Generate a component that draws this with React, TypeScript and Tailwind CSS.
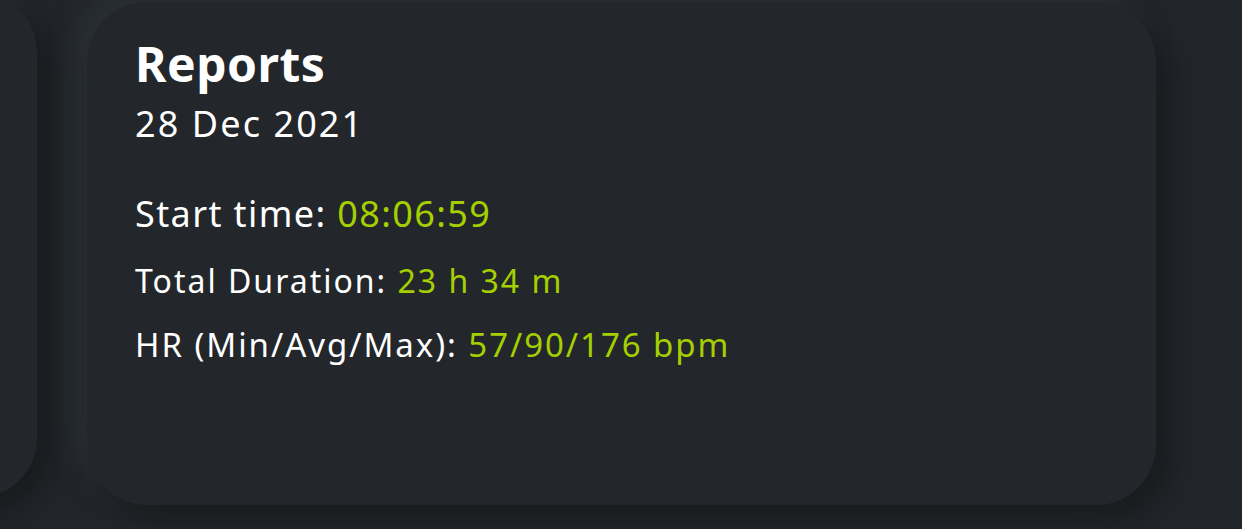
export default function App() {
  return (
    <div className="h-[529px] w-full overflow-hidden bg-[#22262a] flex items-start gap-[50px] font-['Noto_Sans',sans-serif]">
      {/* previous card, mostly scrolled out of view */}
      <div className="shrink-0 w-[400px] -ml-[363px] -mt-[8px] h-[506px] rounded-[60px] bg-[#23272b] shadow-[16px_16px_28px_#191c1f,-12px_-12px_24px_#2b3035]" />

      {/* reports card */}
      <div className="shrink-0 w-[1069px] h-[503px] mt-[2px] rounded-[60px] bg-[#23272b] shadow-[16px_16px_28px_#191c1f,-12px_-12px_24px_#2b3035] pl-[48px] pt-[34px] text-white">
        <h1 className="text-[48px] leading-[56px] font-bold tracking-[0.5px]">Reports</h1>
        <p className="text-[36px] leading-[64px] tracking-[2.1px]">28 Dec 2021</p>

        <div className="mt-[26px]">
          <p className="text-[36px] leading-[64px] tracking-[1.4px]">
            Start time: <span className="text-[#a5cf00]">08:06:59</span>
          </p>
          <p className="mt-[3px] text-[32px] leading-[64px] tracking-[2px]">
            Total Duration: <span className="text-[#a5cf00]">23 h 34 m</span>
          </p>
          <p className="text-[33px] leading-[64px] tracking-[1.95px]">
            HR (Min/Avg/Max): <span className="text-[#a5cf00]">57/90/176 bpm</span>
          </p>
        </div>
      </div>
    </div>
  );
}
